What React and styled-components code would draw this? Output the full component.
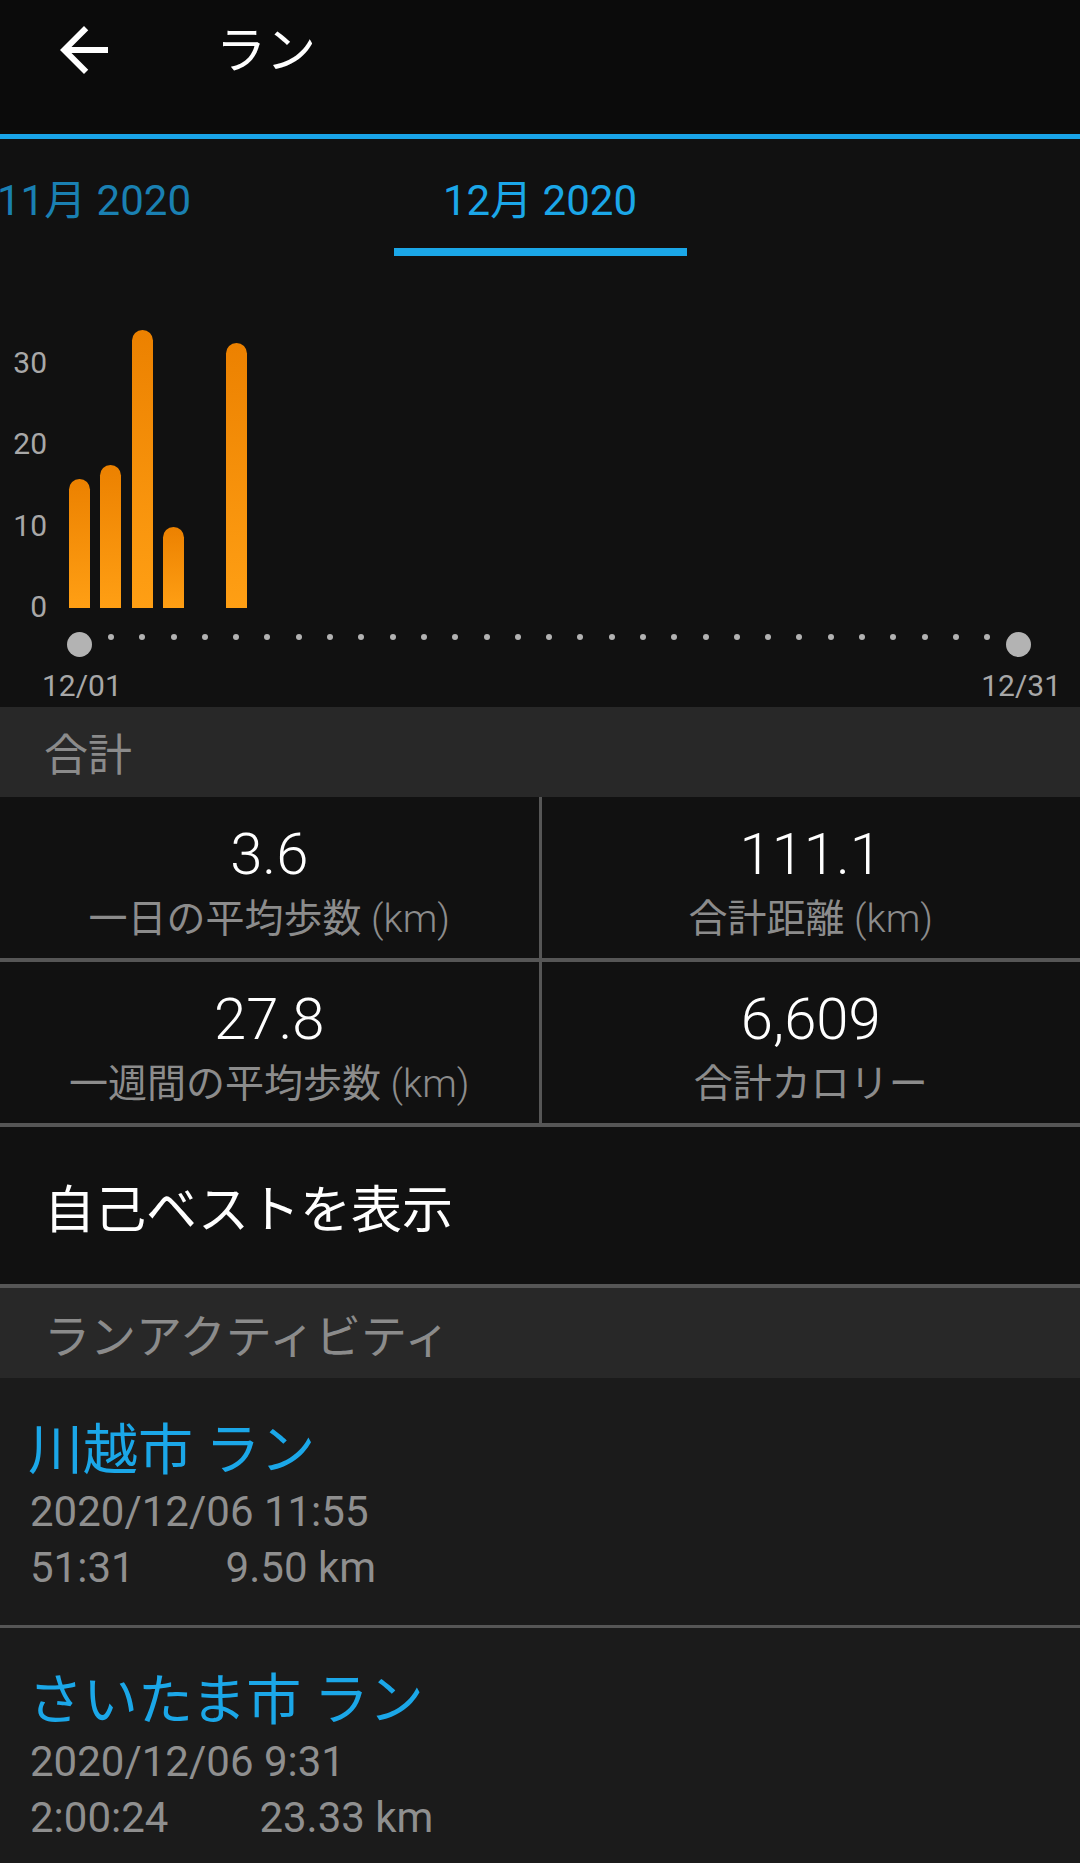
import React from "react";
import styled, { createGlobalStyle } from "styled-components";

const GlobalStyle = createGlobalStyle`
  html, body {
    margin: 0;
    padding: 0;
    background: #111111;
  }
  body {
    font-family: Roboto, "Noto Sans CJK JP", sans-serif;
  }
`;

const Screen = styled.div`
  width: 1080px;
  height: 1863px;
  overflow: hidden;
  background: #111111;
  color: #ffffff;
  font-family: Roboto, "Noto Sans CJK JP", sans-serif;
`;

const Header = styled.header`
  height: 139px;
  box-sizing: border-box;
  background: #0b0b0b;
  display: flex;
  align-items: flex-start;
  padding: 14px 0 0 48px;
  border-bottom: 5px solid #19a4e8;
`;

const BackButton = styled.button`
  width: 72px;
  height: 72px;
  padding: 0;
  border: none;
  background: none;
  color: #ffffff;
  display: flex;
  align-items: center;
  justify-content: center;
`;

const Title = styled.h1`
  margin: 2px 0 0 96px;
  font-family: "Noto Sans CJK JP", sans-serif;
  font-size: 50px;
  font-weight: 400;
  line-height: 60px;
  color: #ffffff;
`;

const TabBar = styled.nav`
  width: 1080px;
  overflow: hidden;
  padding-top: 37px;
`;

const TabStrip = styled.div`
  display: flex;
  margin-left: -129px;
`;

const Tab = styled.div`
  width: 446px;
  flex-shrink: 0;
  display: flex;
  flex-direction: column;
  align-items: center;
`;

const TabLabel = styled.span`
  font-size: 42px;
  line-height: 50px;
  color: ${({ $active }) => ($active ? "#1ba7e8" : "#1a80b2")};
  white-space: nowrap;
`;

const TabUnderline = styled.div`
  margin-top: 22px;
  width: 293px;
  height: 8px;
  background: ${({ $active }) => ($active ? "#1ba7e8" : "transparent")};
`;

const Chart = styled.section`
  height: 451px;
  padding-top: 64px;
  box-sizing: border-box;
`;

const ChartBody = styled.div`
  display: flex;
  align-items: flex-start;
`;

const Axis = styled.div`
  width: 47px;
  margin-top: 28px;
  height: 274px;
  display: flex;
  flex-direction: column;
  justify-content: space-between;
  align-items: flex-end;
  margin-right: 17px;
`;

const AxisLabel = styled.span`
  font-size: 30px;
  line-height: 30px;
  color: #a8a8a8;
`;

const Plot = styled.div`
  width: 970px;
  display: flex;
  flex-direction: column;
`;

const Bars = styled.div`
  height: 288px;
  display: flex;
  align-items: flex-end;
`;

const DaySlot = styled.div`
  flex: 1;
  display: flex;
  justify-content: center;
  align-items: ${({ $align }) => $align || "flex-end"};
`;

const Bar = styled.div`
  width: 21px;
  border-radius: 11px 11px 0 0;
  background: linear-gradient(180deg, #ec8100 0%, #ff9f14 100%);
`;

const Dots = styled.div`
  margin-top: 24px;
  height: 25px;
  display: flex;
`;

const Dot = styled.div`
  width: ${({ $big }) => ($big ? 25 : 6)}px;
  height: ${({ $big }) => ($big ? 25 : 6)}px;
  margin-top: ${({ $big }) => ($big ? 0 : 2)}px;
  border-radius: 50%;
  background: #b3b3b3;
`;

const DateRow = styled.div`
  margin: 11px 0 0 42px;
  width: 1019px;
  display: flex;
  justify-content: space-between;
`;

const DateLabel = styled.span`
  font-size: 30px;
  line-height: 36px;
  color: #a8a8a8;
`;

const SectionHeader = styled.div`
  height: 90px;
  background: #282828;
  display: flex;
  align-items: center;
  padding-left: 44px;
  font-family: "Noto Sans CJK JP", sans-serif;
  font-size: ${({ $size }) => $size || 44}px;
  color: #8b8b8b;
`;

const StatsGrid = styled.div`
  display: grid;
  grid-template-columns: 1fr 1fr;
  grid-auto-rows: 161px;
  gap: 4px 3px;
  padding-bottom: 4px;
  background: #565656;
`;

const StatCell = styled.div`
  background: #111111;
  display: flex;
  flex-direction: column;
  align-items: center;
  padding-top: 27px;
  box-sizing: border-box;
`;

const StatValue = styled.span`
  font-size: 58px;
  font-weight: 300;
  line-height: 60px;
  color: #ffffff;
`;

const StatLabel = styled.span`
  margin-top: 11px;
  font-size: 39px;
  line-height: 48px;
  color: #8c8c8c;
  white-space: nowrap;

  small {
    font-size: 39px;
    font-weight: 300;
  }
`;

const LinkRow = styled.div`
  height: 157px;
  display: flex;
  align-items: center;
  padding-left: 44px;
  border-bottom: 4px solid #565656;
  font-family: "Noto Sans CJK JP", sans-serif;
  font-size: 51px;
  color: #ffffff;
`;

const ActivityItem = styled.div`
  background: #1b1b1b;
  padding: 32px 0 29px 28px;
  border-bottom: 3px solid #565656;
`;

const ActivityTitle = styled.div`
  font-family: "Noto Sans CJK JP", sans-serif;
  font-size: 55px;
  line-height: 70px;
  color: #1ba7e8;
`;

const ActivityLine = styled.div`
  margin-top: ${({ $first }) => ($first ? 4 : 0)}px;
  display: flex;
  gap: 91px;
  padding-left: 2px;
  font-size: 42px;
  line-height: 56px;
  color: #8f8f8f;
`;

const ArrowBack = () => (
  <svg width="72" height="72" viewBox="0 0 24 24" fill="currentColor">
    <path d="M20 11H7.83l5.59-5.59L12 4l-8 8 8 8 1.41-1.41L7.83 13H20v-2z" />
  </svg>
);

const dailyKm = [15.9, 17.6, 34.2, 10.0, 0, 32.6];
const days = Array.from({ length: 31 }, (_, i) => dailyKm[i] || 0);
const pxPerKm = 8.13;

const stats = [
  { value: "3.6", label: "一日の平均歩数", unit: "(km)" },
  { value: "111.1", label: "合計距離", unit: "(km)" },
  { value: "27.8", label: "一週間の平均歩数", unit: "(km)" },
  { value: "6,609", label: "合計カロリー" },
];

const activities = [
  { title: "川越市 ラン", date: "2020/12/06 11:55", time: "51:31", dist: "9.50 km" },
  { title: "さいたま市 ラン", date: "2020/12/06 9:31", time: "2:00:24", dist: "23.33 km" },
];

export default function App() {
  return (
    <Screen>
      <GlobalStyle />
      <Header>
        <BackButton aria-label="戻る">
          <ArrowBack />
        </BackButton>
        <Title>ラン</Title>
      </Header>

      <TabBar>
        <TabStrip>
          <Tab>
            <TabLabel>11月 2020</TabLabel>
            <TabUnderline />
          </Tab>
          <Tab>
            <TabLabel $active>12月 2020</TabLabel>
            <TabUnderline $active />
          </Tab>
        </TabStrip>
      </TabBar>

      <Chart>
        <ChartBody>
          <Axis>
            {["30", "20", "10", "0"].map((l) => (
              <AxisLabel key={l}>{l}</AxisLabel>
            ))}
          </Axis>
          <Plot>
            <Bars>
              {days.map((km, i) => (
                <DaySlot key={i}>
                  {km > 0 && <Bar style={{ height: `${km * pxPerKm}px` }} />}
                </DaySlot>
              ))}
            </Bars>
            <Dots>
              {days.map((_, i) => (
                <DaySlot key={i} $align="flex-start">
                  <Dot $big={i === 0 || i === days.length - 1} />
                </DaySlot>
              ))}
            </Dots>
          </Plot>
        </ChartBody>
        <DateRow>
          <DateLabel>12/01</DateLabel>
          <DateLabel>12/31</DateLabel>
        </DateRow>
      </Chart>

      <SectionHeader>合計</SectionHeader>
      <StatsGrid>
        {stats.map((s) => (
          <StatCell key={s.label}>
            <StatValue>{s.value}</StatValue>
            <StatLabel>
              {s.label}
              {s.unit && <small> {s.unit}</small>}
            </StatLabel>
          </StatCell>
        ))}
      </StatsGrid>

      <LinkRow>自己ベストを表示</LinkRow>
      <SectionHeader $size={46}>ランアクティビティ</SectionHeader>

      {activities.map((a) => (
        <ActivityItem key={a.title}>
          <ActivityTitle>{a.title}</ActivityTitle>
          <ActivityLine $first>{a.date}</ActivityLine>
          <ActivityLine>
            <span>{a.time}</span>
            <span>{a.dist}</span>
          </ActivityLine>
        </ActivityItem>
      ))}
    </Screen>
  );
}
